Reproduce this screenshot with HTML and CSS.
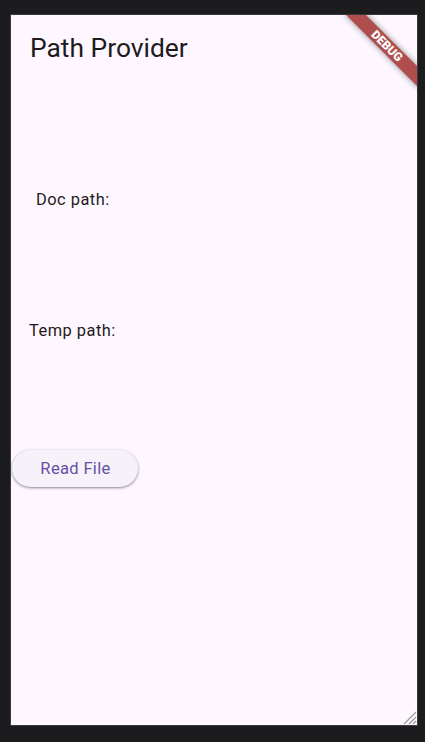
FILE: index.html
```html
<!DOCTYPE html>
<html>
<head>
<meta charset="utf-8">
<link rel="stylesheet" href="styles.css">
</head>
<body>
<div class="frame">
  <header class="appbar"><h1 class="title">Path Provider</h1></header>
  <main class="content">
    <p class="line doc">Doc path:</p>
    <p class="line temp">Temp path:</p>
    <button class="read-btn">Read File</button>
  </main>
  <div class="banner">DEBUG</div>
  <svg class="grip" width="16" height="16" viewBox="0 0 16 16">
    <path d="M15 3 L3 15 M15 8 L8 15 M15 12 L12 15" stroke="#9a9a9a" stroke-width="1.2" fill="none"/>
  </svg>
</div>
</body>
</html>
```

FILE: styles.css
```css
html, body {
  margin: 0;
  padding: 0;
}
body {
  background: #1c1b1d;
  width: 425px;
  height: 742px;
  overflow: hidden;
  padding: 14px 0 0 10px;
  box-sizing: border-box;
  font-family: Roboto, "Liberation Sans", sans-serif;
}
.frame {
  position: relative;
  width: 406px;
  height: 710px;
  border: 1px solid #3a393c;
  background: #fef7ff;
  overflow: hidden;
  display: flex;
  flex-direction: column;
}
.appbar {
  height: 64px;
  display: flex;
  align-items: center;
  padding-left: 19px;
  flex-shrink: 0;
}
.title {
  margin: 2px 0 0;
  font-size: 26.4px;
  font-weight: 400;
  color: #1d1b20;
  line-height: 32px;
}
.content {
  display: flex;
  flex-direction: column;
  align-items: flex-start;
}
.line {
  margin: 0;
  font-size: 16.4px;
  line-height: 24px;
  letter-spacing: 0.5px;
  color: #1d1b20;
}
.doc {
  margin-top: 109px;
  padding-left: 25px;
}
.temp {
  margin-top: 107px;
  padding-left: 18px;
}
.read-btn {
  margin-top: 107px;
  margin-left: 1px;
  width: 126px;
  height: 37px;
  border: none;
  border-radius: 20px;
  background: #f7f2fa;
  color: #6750a4;
  font-family: Roboto, "Liberation Sans", sans-serif;
  font-size: 16.6px;
  letter-spacing: 0.3px;
  box-shadow: 0 1px 2px rgba(0,0,0,0.3), 0 1px 3px 1px rgba(0,0,0,0.12);
  padding: 0 0 0 1px;
}
.banner {
  position: absolute;
  left: 324px;
  top: 24px;
  width: 104px;
  height: 14px;
  transform: rotate(45deg);
  background: #b04e4e;
  color: #fff;
  font-size: 12px;
  font-weight: 900;
  line-height: 14px;
  text-align: center;
  letter-spacing: 0;
  box-shadow: 0 0 6px rgba(0,0,0,0.45);
}
.grip {
  position: absolute;
  right: 0;
  bottom: 0;
}
```
